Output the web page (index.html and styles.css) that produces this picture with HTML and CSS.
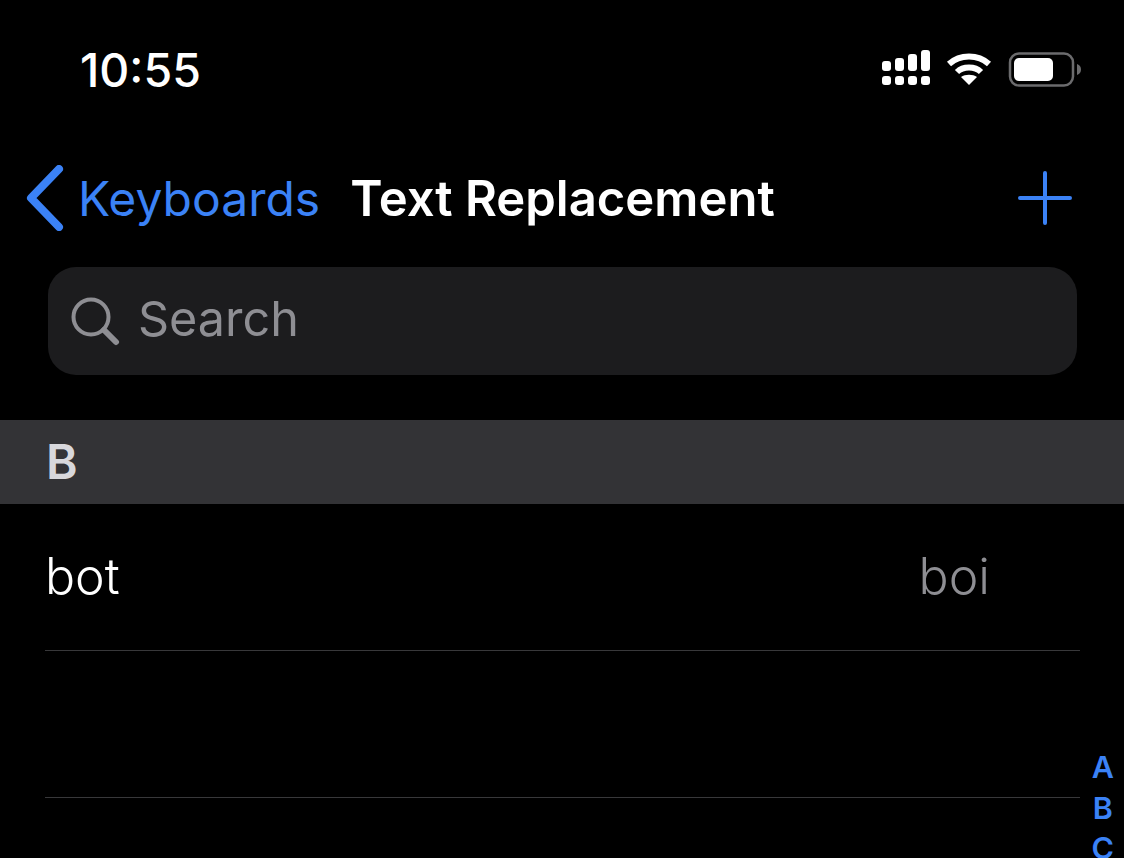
FILE: index.html
```html
<!DOCTYPE html>
<html lang="en">
<head>
    <meta charset="UTF-8">
    <meta name="viewport" content="width=device-width, initial-scale=1.0">
    <title>Text Replacement</title>
    <link rel="stylesheet" href="styles.css">
</head>
<body>
    <div class="screen">
        <div class="status-bar">
            <span class="time">10:55</span>
            <div class="status-icons">
                <svg class="signal" width="48" height="36" viewBox="0 0 48 36" fill="#fff">
                    <rect x="0" y="11" width="9" height="10" rx="3"/>
                    <rect x="13" y="8" width="9" height="13" rx="3"/>
                    <rect x="26" y="4" width="9" height="17" rx="3"/>
                    <rect x="39" y="0" width="9" height="21" rx="3"/>
                    <rect x="0" y="26" width="9" height="9" rx="3"/>
                    <rect x="13" y="26" width="9" height="9" rx="3"/>
                    <rect x="26" y="26" width="9" height="9" rx="3"/>
                    <rect x="39" y="26" width="9" height="9" rx="3"/>
                </svg>
                <svg class="wifi" width="46" height="34" viewBox="0 0 46 34" fill="none" stroke="#fff" stroke-width="6">
                    <path d="M3 13C14 3 32 3 43 13"/>
                    <path d="M11 21C17 15 29 15 35 21"/>
                    <path d="M23 34L15 26C19 23 27 23 31 26Z" fill="#fff" stroke="none"/>
                </svg>
                <svg class="battery" width="74" height="36" viewBox="0 0 74 36">
                    <rect x="2" y="1.500" width="63" height="32" rx="9" fill="none" stroke="#6b6b6d" stroke-width="2.500"/>
                    <rect x="6" y="6" width="39" height="23" rx="5" fill="#fff"/>
                    <path d="M69 12C72 13 73 15 73 17.500C73 20 72 22 69 23Z" fill="#6b6b6d"/>
                </svg>
            </div>
        </div>

        <div class="nav-bar">
            <div class="back">
                <svg width="38" height="66" viewBox="0 0 38 66" fill="none" stroke="#3b82f6" stroke-width="8" stroke-linecap="round" stroke-linejoin="round">
                    <path d="M33 4L5 33L33 62"/>
                </svg>
                <span>Keyboards</span>
            </div>
            <h1 class="title">Text Replacement</h1>
            <svg class="add" width="54" height="54" viewBox="0 0 54 54" stroke="#3b82f6" stroke-width="4" stroke-linecap="round">
                <path d="M27 2V52M2 27H52"/>
            </svg>
        </div>

        <div class="search">
            <svg width="50" height="50" viewBox="0 0 50 50" fill="none" stroke="#8e8e93" stroke-linecap="round">
                <circle cx="21" cy="21" r="17.500" stroke-width="4"/>
                <path d="M34 34L46 46" stroke-width="6"/>
            </svg>
            <span class="search-label">Search</span>
        </div>

        <div class="section-header">B</div>
        <div class="row">
            <span class="phrase">bot</span>
            <span class="shortcut">boi</span>
        </div>
        <div class="row"></div>

        <div class="index">
            <span>A</span>
            <span>B</span>
            <span>C</span>
        </div>
    </div>
</body>
</html>
```

FILE: styles.css
```css
html, body {
    margin: 0;
    background: #000;
}
body {
    font-family: Inter, "Noto Sans", sans-serif;
    color: #fff;
}
.screen {
    position: relative;
    width: 1124px;
    height: 858px;
    overflow: hidden;
    background: #000;
}
.status-bar {
    height: 140px;
    display: flex;
    justify-content: space-between;
    align-items: center;
    padding: 0 42px 0 80px;
    box-sizing: border-box;
}
.time {
    font-size: 46.500px;
    font-weight: 500;
}
.status-icons {
    display: flex;
    align-items: center;
    gap: 16px;
}
.signal, .wifi {
    margin-bottom: 4px;
}
.nav-bar {
    height: 116px;
    display: flex;
    align-items: center;
    padding: 0 52px 0 26px;
    box-sizing: border-box;
    margin-bottom: 11px;
}
.back {
    display: flex;
    align-items: center;
    gap: 14px;
    color: #3b82f6;
    font-size: 48px;
}
.title {
    flex: 1;
    margin: 0 0 0 30px;
    font-size: 49px;
    font-weight: 600;
}
.search {
    display: flex;
    align-items: center;
    gap: 18px;
    height: 108px;
    margin: 0 47px 45px 48px;
    padding: 0 0 0 22px;
    border-radius: 28px;
    background: #1c1c1e;
    color: #8e8e93;
    font-size: 48.500px;
    line-height: 104px;
}
.search-label {
    margin-bottom: 4px;
}
.section-header {
    height: 84px;
    line-height: 84px;
    padding-left: 46px;
    background: #333336;
    color: #d8d8dc;
    font-size: 48px;
    font-weight: 600;
}
.row {
    height: 144px;
    margin: 0 44px 0 45px;
    display: flex;
    justify-content: space-between;
    align-items: center;
    padding: 0 90px 2px 0;
    border-bottom: 1px solid #38383a;
    font-size: 50px;
    font-weight: 350;
}
.shortcut {
    color: #8e8e93;
}
.index {
    position: absolute;
    right: 10px;
    top: 747px;
    display: flex;
    flex-direction: column;
    align-items: center;
    color: #3b82f6;
    font-size: 30.500px;
    font-weight: 600;
    line-height: 40.500px;
}
```
